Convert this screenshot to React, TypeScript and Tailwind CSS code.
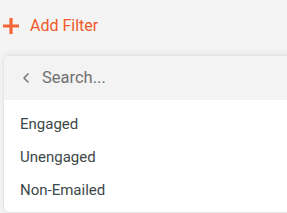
import { ChevronLeft } from "lucide-react";

const options = ["Engaged", "Unengaged", "Non-Emailed"];

export default function App() {
  return (
    <div
      className="h-[213px] w-[287px] overflow-hidden bg-[#f4f4f4]"
      style={{ fontFamily: "Roboto, 'Noto Sans', sans-serif" }}
    >
      <button className="flex h-[41px] items-center gap-[11px] pl-[3px] pt-[10px] text-[16px] text-[#f1592a]">
        <svg width="16" height="16" viewBox="0 0 16 16" aria-hidden>
          <path d="M8 0v16M0 8h16" stroke="#f36639" strokeWidth="3.2" />
        </svg>
        <span>Add Filter</span>
      </button>

      <div className="ml-[3px] mt-[14px] w-[300px] overflow-hidden rounded-[6px] border border-[#e4e4e4] bg-white shadow-[0_-2px_6px_rgba(0,0,0,0.06)]">
        <div className="flex h-[44px] items-center bg-[#f3f3f3] pl-[14px]">
          <ChevronLeft className="h-[16px] w-[16px] text-[#777]" strokeWidth={2.4} />
          <span className="ml-[8px] text-[16.5px] text-[#6f6f6f]">Search...</span>
        </div>
        <ul className="pb-[5px] pt-[8px]">
          {options.map((o) => (
            <li key={o} className="flex h-[33px] items-center pl-[16px] text-[15px] text-[#3d4848]">
              {o}
            </li>
          ))}
        </ul>
      </div>

      <div className="flex gap-[96px] pl-[40px] text-[14px] font-medium text-[#2f2f2f]">
        <span>Name</span>
        <span>Email</span>
      </div>
    </div>
  );
}
